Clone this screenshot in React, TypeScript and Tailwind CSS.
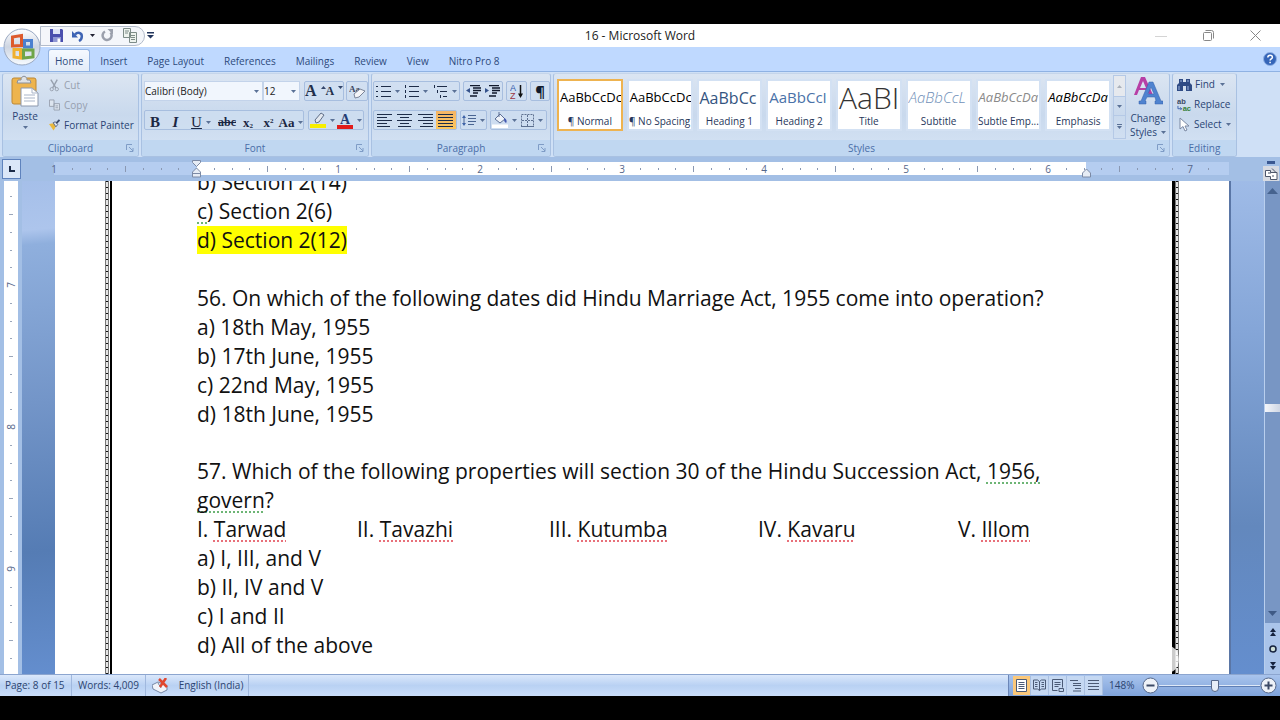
import type { ReactNode } from "react";

const tabs = ["Insert", "Page Layout", "References", "Mailings", "Review", "View", "Nitro Pro 8"];

const styleCells = [
  { name: "¶ Normal", sample: "AaBbCcDc", look: "text-[13px] text-black" },
  { name: "¶ No Spacing", sample: "AaBbCcDc", look: "text-[13px] text-black" },
  { name: "Heading 1", sample: "AaBbCc", look: "text-[16px] text-[#34547f]" },
  { name: "Heading 2", sample: "AaBbCcI", look: "text-[15px] text-[#4a72a8]" },
  { name: "Title", sample: "AaBI", look: "text-[30px] font-light text-[#333]" },
  { name: "Subtitle", sample: "AaBbCcL", look: "text-[15px] font-light italic text-[#6f8fb8]" },
  { name: "Subtle Emp...", sample: "AaBbCcDa", look: "text-[13px] italic text-[#8a8a8a]" },
  { name: "Emphasis", sample: "AaBbCcDa", look: "text-[13px] italic text-black" },
];

const squiggle = "underline decoration-dotted decoration-2 underline-offset-3 [text-decoration-skip-ink:none]";
const red = `${squiggle} decoration-[#e8707a]`;
const green = `${squiggle} decoration-[#6db575]`;

function Caret({ color = "#5a7196" }: { color?: string }) {
  return (
    <svg width="5" height="3" viewBox="0 0 5 3" className="shrink-0">
      <path d="M0 0h5L2.5 3z" fill={color} />
    </svg>
  );
}

function Launcher() {
  return (
    <button aria-label="More options" className="absolute right-1 top-1">
      <svg width="8" height="8" viewBox="0 0 8 8" fill="none" stroke="#7f9cc6">
        <path d="M.5 6V.5H6M3 3l4 4M7 4v3.500H3.500" />
      </svg>
    </button>
  );
}

function Group({ label, className = "", launcher = true, children }: { label: string; className?: string; launcher?: boolean; children: ReactNode }) {
  return (
    <section className={`flex flex-col overflow-hidden rounded-[3px] border border-[#a9c1e2] border-t-[#c5d5ea] bg-linear-to-b from-[#dbe5f2] via-[#c9d9ed] to-[#d6e4f5] ${className}`}>
      <div className="flex-1">{children}</div>
      <div className="relative flex h-4 items-center justify-center bg-[#c0d7f1] text-[10px] text-[#4a6ea8]">
        {label}
        {launcher && <Launcher />}
      </div>
    </section>
  );
}

function Box({ className = "", children }: { className?: string; children: ReactNode }) {
  return <div className={`flex h-5 items-center rounded-[2px] border border-[#a7bedf] bg-[#cfdef1]/70 ${className}`}>{children}</div>;
}

function Tool({ label, className = "", children }: { label: string; className?: string; children: ReactNode }) {
  return (
    <button aria-label={label} className={`flex h-full flex-1 items-center justify-center gap-1 ${className}`}>
      {children}
    </button>
  );
}

function Lines({ d }: { d: string }) {
  return (
    <svg width="15" height="13" viewBox="0 0 15 13" stroke="#1d2c48" fill="none">
      <path d={d} />
    </svg>
  );
}

function OfficeButton() {
  return (
    <button aria-label="Office Button" className="absolute left-[3px] top-1 z-10 h-[38px] w-[38px]">
      <svg viewBox="0 0 38 38" className="h-full w-full">
        <defs>
          <linearGradient id="orb" x1="0" y1="0" x2="0" y2="1">
            <stop offset="0" stopColor="#fff" />
            <stop offset=".5" stopColor="#cdd5e2" />
            <stop offset="1" stopColor="#f7fbff" />
          </linearGradient>
        </defs>
        <circle cx="19" cy="19" r="18" fill="url(#orb)" stroke="#9aa9c2" />
        <g fill="none" strokeWidth="3">
          <path d="M9.500 9l9-1.500v10l-9 .5z" stroke="#dd5a2c" />
          <path d="M21.500 12.500h7v6.500h-7z" stroke="#4b80cf" />
          <path d="M11 21.500h6.500V30l-6.500-1z" stroke="#f0b02e" />
          <path d="M20.500 22h9.500V29l-9.500 1z" stroke="#6fa548" />
        </g>
      </svg>
    </button>
  );
}

function TitleBar() {
  return (
    <header className="relative flex h-[23px] items-center bg-white text-[12px] text-[#222]">
      <div className="ml-10 flex h-5 items-center rounded-r-full border border-[#b3bccb] bg-[#f4f6fa] pl-2 pr-1.5">
        <button aria-label="Save" className="mr-[7px]">
          <svg width="15" height="15" viewBox="0 0 15 15">
            <path d="M1 1h12l1 1v12H1z" fill="#4a4fae" />
            <path d="M4 1h7v5H4z" fill="#dfe5f7" />
            <path d="M4 9h8v5H4z" fill="#8f97d3" />
            <path d="M8.500 10.500H11V14H8.500z" fill="#fff" />
          </svg>
        </button>
        <button aria-label="Undo" className="mr-1.5 flex items-center gap-1.5">
          <svg width="13" height="13" viewBox="0 0 13 13">
            <path d="M4 5.500C7 2.500 11 4 10.800 7.500c0 2-1 3.500-2.800 4.500" fill="none" stroke="#3d63b4" strokeWidth="2.500" />
            <path d="M1 2v6.500h6z" fill="#3d63b4" />
          </svg>
          <Caret color="#223" />
        </button>
        <button aria-label="Repeat" className="mr-2">
          <svg width="13" height="13" viewBox="0 0 13 13">
            <path d="M4 2.500a4.500 4.500 0 1 0 5.500 1" fill="none" stroke="#9ba0ac" strokeWidth="2.500" />
            <path d="M6.500 0H12v5.500z" fill="#9ba0ac" />
          </svg>
        </button>
        <button aria-label="Compare documents">
          <svg width="16" height="15" viewBox="0 0 16 15" fill="#eef3ee" stroke="#7d8c88">
            <path d="M1.500.5h7v9h-7zM7.500 4.500h7v10h-7z" />
            <path d="M3 3h4M3 5h3M9 7.500h4M9 9.500h4M9 11.500h4" />
          </svg>
        </button>
      </div>
      <button aria-label="Customize Quick Access Toolbar" className="ml-0.5">
        <svg width="7" height="7" viewBox="0 0 7 7" fill="#23355c">
          <path d="M0 0h7v1.500H0zM0 3h7L3.500 6.500z" />
        </svg>
      </button>
      <h1 className="absolute inset-x-0 text-center">16 - Microsoft Word</h1>
      <div className="relative ml-auto mr-[19px] flex items-center gap-9">
        <button aria-label="Minimize">
          <svg width="12" height="12" viewBox="0 0 12 12"><path d="M0 6.500h12" stroke="#d4d4d4" /></svg>
        </button>
        <button aria-label="Restore">
          <svg width="11" height="11" viewBox="0 0 11 11" fill="none" stroke="#888">
            <rect x=".5" y="2.500" width="8" height="8" rx="1" />
            <path d="M2.500.5h6a2 2 0 0 1 2 2v6" />
          </svg>
        </button>
        <button aria-label="Close">
          <svg width="11" height="11" viewBox="0 0 11 11" stroke="#888"><path d="M.5.5l10 10M10.500.5l-10 10" /></svg>
        </button>
      </div>
    </header>
  );
}

function Tabs() {
  return (
    <nav className="flex h-6 items-end bg-[#bfd9ff] pl-12 text-[10px] text-[#2d4a7c]">
      <button className="h-[22px] rounded-t-[3px] border border-b-0 border-[#94b4e2] bg-linear-to-b from-[#f5f9ff] to-[#e3ecf8] px-1.5 pt-0.5">Home</button>
      {tabs.map((tab) => (
        <button key={tab} className="h-[22px] px-[10px] pt-0.5">{tab}</button>
      ))}
      <button aria-label="Help" className="mb-[5px] ml-auto mr-[3px]">
        <svg width="14" height="14" viewBox="0 0 14 14">
          <circle cx="7" cy="7" r="6.500" fill="#3565b8" stroke="#8fb0e4" />
          <path d="M4.800 5.500c0-3 4.600-3 4.600-.3 0 1.700-2.300 1.600-2.300 3.300M7.100 9.800v1.500" fill="none" stroke="#fff" strokeWidth="1.500" />
        </svg>
      </button>
    </nav>
  );
}

function Clipboard() {
  return (
    <Group label="Clipboard" className="w-[137px]">
      <div className="flex pl-2 pt-px">
        <button className="flex w-7 flex-col items-center text-[10px] text-[#2a4474]">
          <svg width="28" height="32" viewBox="0 0 28 32">
            <rect x="1" y="3" width="24" height="26" rx="2" fill="#eeb44e" stroke="#bd8835" />
            <path d="M7 5h3c0-5 6-5 6 0h3l1 3H6z" fill="#dfe2e6" stroke="#8a8f99" />
            <path d="M10 13h11l6 5v13H10z" fill="#fff" stroke="#8c98ad" />
            <path d="M21 13v5h6M13 20h11M13 23h11M13 26h11" fill="none" stroke="#a9b5c9" />
          </svg>
          <span className="mt-0.5 leading-[14px]">Paste</span>
          <span className="flex h-2 items-center"><Caret /></span>
        </button>
        <div className="ml-2.5 flex flex-col text-[10px] leading-5 text-[#2a4474]">
          <button className="flex items-center gap-1 text-[#97a0ae]">
            <svg width="11" height="13" viewBox="0 0 12 13" fill="none" stroke="#97a0ae">
              <path d="M2 0l5.500 9M9 0L4 9" strokeWidth="1.500" />
              <circle cx="3" cy="10.500" r="1.800" />
              <circle cx="8.500" cy="10.500" r="1.800" />
            </svg>
            Cut
          </button>
          <button className="flex items-center gap-1 text-[#97a0ae]">
            <svg width="11" height="12" viewBox="0 0 12 12" fill="#dde5ef" stroke="#97a0ae">
              <path d="M.5.5h5v7h-5zM5.500 4.500h6v7h-6z" />
              <path d="M7 7h3M7 9h3" />
            </svg>
            Copy
          </button>
          <button className="flex items-center gap-1 whitespace-nowrap">
            <svg width="11" height="12" viewBox="0 0 12 12">
              <path d="M0 5l5-1 2.500 3.500L5 12z" fill="#e9b93e" />
              <path d="M4.500 3.500l2.500-1 2.500 3L7.500 8z" fill="#dde5f2" stroke="#56637c" />
              <path d="M8 4l3.500-3.500" stroke="#3c4c6c" strokeWidth="2" />
            </svg>
            Format Painter
          </button>
        </div>
      </div>
    </Group>
  );
}

function Combo({ label, value, className }: { label: string; value: string; className: string }) {
  return (
    <div className={`relative ${className}`}>
      <select aria-label={label} className="block h-5 w-full appearance-none border border-[#c3d3ea] bg-[#f1f6fd] text-[10px] text-[#222]">
        <option>{value}</option>
      </select>
      <span className="pointer-events-none absolute right-1 top-[9px]"><Caret /></span>
    </div>
  );
}

function FontGroup() {
  return (
    <Group label="Font" className="w-[228px]">
      <div className="flex flex-col gap-[9px] pl-0.5 pt-[7px]">
        <div className="flex">
          <Combo label="Font" value="Calibri (Body)" className="w-[119px]" />
          <Combo label="Font size" value="12" className="w-[37px]" />
          <Box className="ml-1 w-10 font-['Liberation_Serif'] font-bold text-[#222f4a]">
            <Tool label="Grow font" className="gap-0 text-[16px]">A<span className="-mt-2 rotate-180"><Caret color="#33456a" /></span></Tool>
            <Tool label="Shrink font" className="gap-0 text-[12px]">A<span className="-mt-2"><Caret color="#33456a" /></span></Tool>
          </Box>
          <Box className="ml-0.5 w-[22px]">
            <Tool label="Clear formatting">
              <svg width="17" height="15" viewBox="0 0 17 15">
                <text x="0" y="8" fontSize="9" fontFamily="Liberation Serif" fontWeight="bold" fill="#3a4660">Aa</text>
                <path d="M5 10l6-5 5 2-6 6-4 1z" fill="#f4f5f8" stroke="#7b8498" />
              </svg>
            </Tool>
          </Box>
        </div>
        <div className="flex gap-1">
          <Box className="w-[160px] font-['Liberation_Serif'] text-[#1b2743]">
            <div className="grid h-full grid-cols-[20px_21px_30px_22px_20px_21px_24px]">
              <Tool label="Bold" className="text-[15px] font-bold">B</Tool>
              <Tool label="Italic" className="text-[15px] font-bold italic">I</Tool>
              <Tool label="Underline" className="text-[15px]"><u>U</u><Caret /></Tool>
              <Tool label="Strikethrough" className="text-[12px] font-bold line-through">abc</Tool>
              <Tool label="Subscript" className="text-[13px] font-bold"><span>x<sub className="text-[7px]">2</sub></span></Tool>
              <Tool label="Superscript" className="text-[13px] font-bold"><span>x<sup className="text-[7px]">2</sup></span></Tool>
              <Tool label="Change case" className="gap-0 text-[13px] font-bold">Aa<Caret /></Tool>
            </div>
          </Box>
          <Box className="w-[56px]">
            <Tool label="Highlight color">
              <svg width="16" height="16" viewBox="0 0 16 16">
                <path d="M5 8l6-7 3 2-5 7-3 1z" fill="#e3e8ef" stroke="#606f88" />
                <path d="M0 12h16v4H0z" fill="#f7ee00" />
              </svg>
              <Caret />
            </Tool>
            <Tool label="Font color">
              <svg width="16" height="17" viewBox="0 0 16 17">
                <text x="3" y="12" fontSize="14" fontFamily="Liberation Serif" fontWeight="bold" fill="#273d74">A</text>
                <path d="M0 13h16v4H0z" fill="#e21b1b" />
              </svg>
              <Caret />
            </Tool>
          </Box>
        </div>
      </div>
    </Group>
  );
}

function ParagraphGroup() {
  return (
    <Group label="Paragraph" className="w-[180px]">
      <div className="flex flex-col gap-[9px] pl-px pt-[7px]">
        <div className="flex gap-[3px]">
          <Box className="w-[88px]">
            <Tool label="Bullets"><Lines d="M5 1.500h10M5 6.500h10M5 11.500h10M0 1.500h2M0 6.500h2M0 11.500h2" /><Caret /></Tool>
            <Tool label="Numbering"><Lines d="M5 1.500h10M5 6.500h10M5 11.500h10M1.500 0v3M1.500 5v3M1.500 10v3" /><Caret /></Tool>
            <Tool label="Multilevel list"><Lines d="M4 1.500h10M7 6.500h7M10 11.500h4M1.500 0v3M4.500 5v3M7.500 10v3" /><Caret /></Tool>
          </Box>
          <Box className="w-[41px]">
            <Tool label="Decrease indent">
              <svg width="15" height="12" viewBox="0 0 15 12"><path d="M4 .5h10M7 3h8M7 5.500h8M7 8h5M4 11h7" stroke="#111a2c" strokeWidth="1.500" /><path d="M4 3v5L0 5.500z" fill="#35538c" /></svg>
            </Tool>
            <Tool label="Increase indent">
              <svg width="15" height="12" viewBox="0 0 15 12"><path d="M4 .5h10M7 3h8M7 5.500h8M7 8h5M4 11h7" stroke="#111a2c" strokeWidth="1.500" /><path d="M0 3v5l4-2.500z" fill="#35538c" /></svg>
            </Tool>
          </Box>
          <Box className="w-[21px]">
            <Tool label="Sort">
              <svg width="14" height="17" viewBox="0 0 14 17">
                <text x="0" y="8" fontSize="9" fontFamily="Liberation Sans" fill="#3059ab">A</text>
                <text x="0" y="16" fontSize="9" fontFamily="Liberation Sans" fill="#9b3443">Z</text>
                <path d="M10.500 2v11" stroke="#111" strokeWidth="1.500" />
                <path d="M8 10.500h5L10.500 15z" fill="#111" />
              </svg>
            </Tool>
          </Box>
          <Box className="w-[20px]"><Tool label="Show formatting marks" className="text-[15px] font-bold text-[#111a2c]">¶</Tool></Box>
        </div>
        <div className="flex gap-[3px]">
          <Box className="w-[84px]">
            <Tool label="Align left"><Lines d="M0 .5h15M0 3.500h10M0 6.500h15M0 9.500h10M0 12.500h13" /></Tool>
            <Tool label="Center"><Lines d="M0 .5h15M3 3.500h9M0 6.500h15M3 9.500h9M1 12.500h13" /></Tool>
            <Tool label="Align right"><Lines d="M0 .5h15M5 3.500h10M0 6.500h15M5 9.500h10M2 12.500h13" /></Tool>
            <Tool label="Justify" className="bg-linear-to-b from-[#f5b566] to-[#fcc65c]"><Lines d="M0 .5h15M0 3.500h15M0 6.500h15M0 9.500h15M0 12.500h15" /></Tool>
          </Box>
          <Box className="w-[27px]">
            <Tool label="Line spacing">
              <svg width="14" height="13" viewBox="0 0 14 13" stroke="#4a6592"><path d="M6 1.500h8M6 4.500h8M6 7.500h8M6 10.500h6M2 3v7" /><path d="M0 4l2-3 2 3zM0 9l2 3 2-3z" fill="#3d62a8" stroke="none" /></svg>
              <Caret />
            </Tool>
          </Box>
          <Box className="w-[57px]">
            <Tool label="Shading">
              <svg width="16" height="16" viewBox="0 0 16 16"><path d="M3 7l5-5 5 5-5 4z" fill="#eef2f9" stroke="#5c6f95" /><path d="M7 0v5" stroke="#5c6f95" /><path d="M12 6c3 1 3 4 2 5-2-1-2-3-2-5" fill="#4459b0" /><path d="M0 12.500h16V16H0z" fill="#fff" /></svg>
              <Caret />
            </Tool>
            <Tool label="Borders">
              <svg width="13" height="13" viewBox="0 0 13 13" fill="none" stroke="#5f7190"><path d="M.5.5h12v12H.5zM6.500 1v11M1 6.500h11" strokeDasharray="2 1" /><path d="M0 12.500h13" /></svg>
              <Caret />
            </Tool>
          </Box>
        </div>
      </div>
    </Group>
  );
}

function StylesGroup() {
  return (
    <Group label="Styles" className="min-w-0 flex-1">
      <div className="flex pt-[5px]">
        <div className="flex min-w-0 flex-1 gap-1 pl-[3px]">
          {styleCells.map((cell, i) => (
            <button
              key={cell.name}
              className={`flex h-[52px] min-w-0 flex-1 flex-col overflow-hidden border-2 bg-white pb-px ${i === 0 ? "border-[#eeb350]" : "border-[#d3e1f3]"}`}
            >
              <span className={`flex h-[33px] w-full items-center overflow-hidden whitespace-nowrap pl-px ${cell.look}`}>{cell.sample}</span>
              <span className="w-full whitespace-nowrap text-center text-[10px] leading-[14px] text-[#26365a]">{cell.name}</span>
            </button>
          ))}
        </div>
        <div className="-mt-1 ml-0.5 flex w-[13px] flex-col border border-[#b5c9e6]">
          <button aria-label="Scroll up" className="flex h-5 items-center justify-center bg-[#e6e9ee]"><span className="rotate-180"><Caret color="#aab0ba" /></span></button>
          <button aria-label="Scroll down" className="flex h-5 items-center justify-center border-y border-[#b5c9e6]"><Caret /></button>
          <button aria-label="More styles" className="flex h-5 flex-col items-center justify-center gap-px"><span className="h-px w-[5px] bg-[#5a7196]" /><Caret /></button>
        </div>
        <button className="-mt-1 ml-0.5 mr-px flex w-10 flex-col items-center text-[10px] leading-[14px] text-[#2a4474]">
          <svg width="30" height="31" viewBox="0 0 30 29">
            <path d="M8 1h4l8 18h-4l-2-5H6l-2 5H1zM10 5l-3 7h6z" fill="#b73fa6" />
            <path d="M16 6h4l8 19h2v3h-8v-3h1l-1-4h-8l-2 4h1v3H6v-3h2zM18 11l-3 7h6z" fill="#4f83d0" stroke="#3561a8" strokeWidth=".5" />
          </svg>
          <span className="pt-[5px]">Change</span>
          <span className="flex items-center gap-1">Styles <Caret /></span>
        </button>
      </div>
    </Group>
  );
}

function EditingGroup() {
  return (
    <Group label="Editing" launcher={false} className="w-[65px]">
      <div className="flex flex-col pl-1 text-[10px] leading-5 text-[#2a4474]">
        <button className="flex items-center gap-[3px]">
          <svg width="15" height="13" viewBox="0 0 15 13" fill="#2f4b85"><path d="M2 1h4v3h3V1h4v4l2 2v6H9V8H6v5H0V7l2-2z" /><path d="M2 8v4M11 8v4M4 2v2M11 2v2" stroke="#9fb6df" /></svg>
          Find <span className="ml-0.5"><Caret /></span>
        </button>
        <button className="flex items-center gap-[2px]">
          <svg width="15" height="15" viewBox="0 0 16 15" fontFamily="Liberation Sans" fontWeight="bold">
            <text x="0" y="7" fontSize="8" fill="#3b4964">ab</text>
            <text x="6" y="14" fontSize="8" fill="#35803c">ac</text>
            <path d="M1 9v3h4M3.500 10.500L5 12l-1.500 1.500" fill="none" stroke="#3c62ae" />
          </svg>
          Replace
        </button>
        <button className="flex items-center gap-[2px]">
          <svg width="15" height="15" viewBox="0 0 15 15"><path d="M3 1v11l3-2.500L8 14l2-1-2-4h4z" fill="#fff" stroke="#7a88a3" /></svg>
          Select <span className="ml-0.5"><Caret /></span>
        </button>
      </div>
    </Group>
  );
}

const INCH = 142;

function HorizontalRuler() {
  const marks = Array.from({ length: 66 }, (_, i) => i - 8);
  return (
    <div className="flex h-6 shrink-0 items-center bg-[#a3bfe5]">
      <button aria-label="Tab selector" className="ml-0.5 flex h-5 w-[19px] items-center justify-center border border-[#5f83bd] bg-[#dbe7f8]">
        <svg width="6" height="6" viewBox="0 0 6 6"><path d="M1 0v5h5" fill="none" stroke="#1d2c48" strokeWidth="2" /></svg>
      </button>
      <svg className="ml-[33px] h-[18px] min-w-0 flex-1 overflow-visible">
        <rect y="2" width="1175" height="13" fill="#b5cdf0" />
        <rect x="143" y="2" width="889" height="13" fill="#fff" />
        {marks.map((m) => {
          const x = Math.round(142 + (m * INCH) / 8);
          if (m === 0 || x > 1172) return null;
          if (m % 8 === 0) {
            return <text key={m} x={x} y="13" fontSize="10" textAnchor="middle" fill="#56678a">{Math.abs(m / 8)}</text>;
          }
          return <path key={m} d={m % 4 === 0 ? `M${x}.5 6v6` : `M${x}.5 8v2`} stroke="#8a98b2" />;
        })}
        <path d="M138.500.5h8v2l-4 4-4-4zM142.500 8l4 4v5h-8v-5zM138.500 13.500h8" fill="#e6ecf5" stroke="#7c8aa5" />
        <path d="M1032.500 9l4 4v4h-8v-4z" fill="#e6ecf5" stroke="#7c8aa5" />
      </svg>
      <div className="mr-px flex w-[50px] flex-col items-end self-stretch">
        <span className="mr-1 mt-1 h-[3px] w-2 bg-[#3a5891]" />
        <button aria-label="View ruler" className="mt-0.5 flex h-[15px] w-4 items-center justify-center bg-[#d8dbe2]">
          <svg width="13" height="12" viewBox="0 0 13 12" fill="#fff" stroke="#4d566a"><path d="M.5 2.500h5v2h6.500v7H5.500v-3h-5zM7 .5l4 4M3 5h3M8 7v2" /></svg>
        </button>
      </div>
    </div>
  );
}

function VerticalRuler() {
  const ticks = Array.from({ length: 28 }, (_, i) => i - 5);
  return (
    <svg className="ml-1 h-full w-[14px] shrink-0 bg-white" aria-hidden="true">
      {ticks.map((t) => {
        const y = Math.round(104 + (t * INCH) / 8);
        if (t % 8 === 0) {
          return <text key={t} x="7" y={y} fontSize="10" textAnchor="middle" fill="#56678a" transform={`rotate(-90 7 ${y})`} dy="4">{7 + t / 8}</text>;
        }
        return <path key={t} d={t % 4 === 0 ? `M5 ${y}.5h4` : `M6 ${y}.5h2`} stroke="#9aa6ba" />;
      })}
    </svg>
  );
}

const hatch = "w-1 border-x border-[#777] bg-[repeating-linear-gradient(#111_0_1px,#e4e4e4_1px_6px)]";

function Page() {
  return (
    <article className="flex min-w-0 flex-1 bg-white">
      <div className="ml-[50px] flex shrink-0">
        <div className={hatch} />
        <div className="ml-px w-[2px] bg-black" />
      </div>
      <div className="-mt-[13px] min-w-0 flex-1 pl-[85px] text-[21px] leading-[29px] text-[#111]">
        <p>b) Section 2(14)</p>
        <p><span className={green}>c</span>) Section 2(6)</p>
        <p><span className="bg-[#ffff00]">d) Section 2(12)</span></p>
        <div className="mt-[29px]">
          <p>56. On which of the following dates did Hindu Marriage Act, 1955 come into operation?</p>
          <p>a) 18th May, 1955</p>
          <p>b) 17th June, 1955</p>
          <p>c) 22nd May, 1955</p>
          <p>d) 18th June, 1955</p>
        </div>
        <div className="mt-7">
          <p>57. Which of the following properties will section 30 of the Hindu Succession Act, <span className={green}>1956,</span></p>
          <p><span className={green}>govern</span>?</p>
          <p className="grid grid-cols-[160px_192px_209px_200px_auto] whitespace-nowrap">
            <span>I. <span className={red}>Tarwad</span></span>
            <span>II. <span className={red}>Tavazhi</span></span>
            <span>III. <span className={red}>Kutumba</span></span>
            <span>IV. <span className={red}>Kavaru</span></span>
            <span>V. <span className={red}>Illom</span></span>
          </p>
          <p>a) I, III, and V</p>
          <p>b) II, IV and V</p>
          <p>c) I and II</p>
          <p>d) All of the above</p>
        </div>
      </div>
      <div className="mr-[50px] flex shrink-0">
        <div className="w-[3px] bg-black" />
        <div className={hatch} />
      </div>
    </article>
  );
}

function ScrollBar() {
  return (
    <div className="flex w-4 shrink-0 flex-col items-center border-l border-[#b9cfee] bg-[#7896c4]">
      <button aria-label="Scroll up" className="flex h-5 items-center">
        <svg width="11" height="6" viewBox="0 0 11 6"><path d="M0 6h11L5.500 0z" fill="#46638f" /></svg>
      </button>
      <div className="flex w-full flex-1 flex-col">
        <div className="grow-[203]" />
        <div className="h-2 bg-linear-to-r from-[#f4f6fa] to-[#cfd6e4]" />
        <div className="grow-[191]" />
      </div>
      <button aria-label="Scroll down" className="flex h-5 items-center">
        <svg width="9" height="5" viewBox="0 0 9 5"><path d="M0 0h9L4.500 5z" fill="#3f5a85" /></svg>
      </button>
      <div className="flex h-[51px] w-full flex-col items-center justify-around bg-[#aac4ea] text-[#16233f]">
        <button aria-label="Previous page"><svg width="6" height="8" viewBox="0 0 6 8"><path d="M0 4h6L3 0zM0 8h6L3 4z" fill="currentColor" /></svg></button>
        <button aria-label="Select browse object"><svg width="8" height="8" viewBox="0 0 8 8"><circle cx="4" cy="4" r="3" fill="#cfe0d8" stroke="currentColor" strokeWidth="1.500" /></svg></button>
        <button aria-label="Next page"><svg width="6" height="8" viewBox="0 0 6 8"><path d="M0 0h6L3 4zM0 4h6L3 8z" fill="currentColor" /></svg></button>
      </div>
    </div>
  );
}

function ZoomButton({ label, d }: { label: string; d: string }) {
  return (
    <button aria-label={label} className="shrink-0">
      <svg width="17" height="17" viewBox="0 0 17 17"><circle cx="8.500" cy="8.500" r="7.500" fill="#eef2f8" stroke="#56688a" /><path d={d} stroke="#3c4a66" strokeWidth="2" /></svg>
    </button>
  );
}

function StatusBar() {
  const views = [
    { name: "Print Layout", d: "M1.500.5h10v12h-10zM3.500 3.500h6M3.500 5.500h6M3.500 7.500h6M3.500 9.500h6" },
    { name: "Full Screen Reading", d: "M6.500 2.500v9l-2-1.500h-4v-9h4zl2-1.500h4v9h-4l-2 1.500M2 3.500h2.500M2 5.500h2.500M2 7.500h2.500M8.500 3.500H11M8.500 5.500H11M8.500 7.500H11" },
    { name: "Web Layout", d: "M1.500.5h10v8M1.500.5v11h5M3.500 3.500h6M3.500 5.500h6M3.500 7.500h4M8 9.500h4.500v3H8z" },
    { name: "Outline", d: "M1 1.500h8M4 4.500h8M4 6.500h8M6 9.500h6M4 12h8" },
    { name: "Draft", d: "M1 1.500h11M1 4.500h11M1 7.500h11M1 10.500h11" },
  ];
  return (
    <footer className="flex h-[22px] shrink-0 items-stretch border-t border-[#8ca5cf] bg-linear-to-b from-[#dbe8fb] via-[#b9d1f3] to-[#cadefa] text-[10px] text-[#2c4470]">
      <button className="w-[72px] border-r border-[#a0b8de] pl-[5px] text-left">Page: 8 of 15</button>
      <button className="w-[74px] border-r border-[#a0b8de] pl-1.5 text-left">Words: 4,009</button>
      <button aria-label="Proofing errors" className="w-7 pl-1.5">
        <svg width="16" height="16" viewBox="0 0 16 16">
          <path d="M0 7l6-3 9 4v4l-6 3-8-4z" fill="#f1f4fa" stroke="#7787a5" />
          <path d="M6 5l3 5" stroke="#7787a5" />
          <path d="M7 1l8 8M14 0L8 9" stroke="#e0472f" strokeWidth="2.500" />
        </svg>
      </button>
      <button className="w-[75px] border-r border-[#a0b8de] text-center">English (India)</button>
      <div className="ml-auto flex items-center border-l border-[#6b86b8] bg-linear-to-b from-[#a9c4ed] to-[#7fa3da] pl-1">
        <div className="flex h-[19px] bg-[#c5d8f2]">
          {views.map((v, i) => (
            <button key={v.name} aria-label={v.name} className={`flex w-[18px] items-center justify-center border-r border-[#a9bfe0] ${i === 0 ? "bg-[#fbc87a]" : ""}`}>
              <svg width="13" height="13" viewBox="0 0 13 13" fill={i === 0 ? "#fff" : "none"} stroke="#4b5a75"><path d={v.d} /></svg>
            </button>
          ))}
        </div>
        <button className="ml-1.5 w-[33px] text-left">148%</button>
        <ZoomButton label="Zoom out" d="M4.500 8.500h8" />
        <input
          type="range"
          aria-label="Zoom"
          min="0"
          max="100"
          defaultValue="56"
          className="h-4 w-[101px] appearance-none bg-[linear-gradient(transparent_7px,#dfe9f8_7px_8px,#5f7fb5_8px_9px,transparent_9px)] [&::-webkit-slider-thumb]:h-3 [&::-webkit-slider-thumb]:w-2 [&::-webkit-slider-thumb]:appearance-none [&::-webkit-slider-thumb]:rounded-b-full [&::-webkit-slider-thumb]:border [&::-webkit-slider-thumb]:border-[#56688a] [&::-webkit-slider-thumb]:bg-[#e8eef8]"
        />
        <ZoomButton label="Zoom in" d="M4.500 8.500h8M8.500 4.500v8" />
        <span className="w-[3px]" />
      </div>
    </footer>
  );
}

export default function App() {
  return (
    <div className="flex h-screen flex-col bg-black py-6 font-['Open_Sans',sans-serif]">
      <div className="relative flex min-h-0 flex-1 flex-col">
        <OfficeButton />
        <TitleBar />
        <Tabs />
        <div className="flex h-[86px] shrink-0 gap-0.5 border-t border-[#8fb2e3] bg-[#cfe0f6] px-0.5 pt-px">
          <Clipboard />
          <FontGroup />
          <ParagraphGroup />
          <StylesGroup />
          <EditingGroup />
          <div className="w-[39px]" />
        </div>
        <HorizontalRuler />
        <main className="relative flex min-h-0 flex-1 overflow-hidden bg-[#a3bfe5]">
          <VerticalRuler />
          <div className="ml-1 w-[33px] shrink-0 bg-[linear-gradient(175deg,#a5bfe9_0%,#adc5ec_10%,#8fafdd_13%,#7395c8_45%,#557cb4_75%,#648ece_100%)]" />
          <Page />
          <div className="w-[35px] shrink-0 border-l-2 border-[#5a76a6] bg-[linear-gradient(#9fbbe7_0%,#85a6d8_30%,#6388bd_70%,#648ece_100%)]" />
          <ScrollBar />
          <div className="pointer-events-none absolute bottom-0 right-[50px] text-[50px] font-bold leading-10 text-white/80">zoom</div>
        </main>
        <StatusBar />
      </div>
    </div>
  );
}
